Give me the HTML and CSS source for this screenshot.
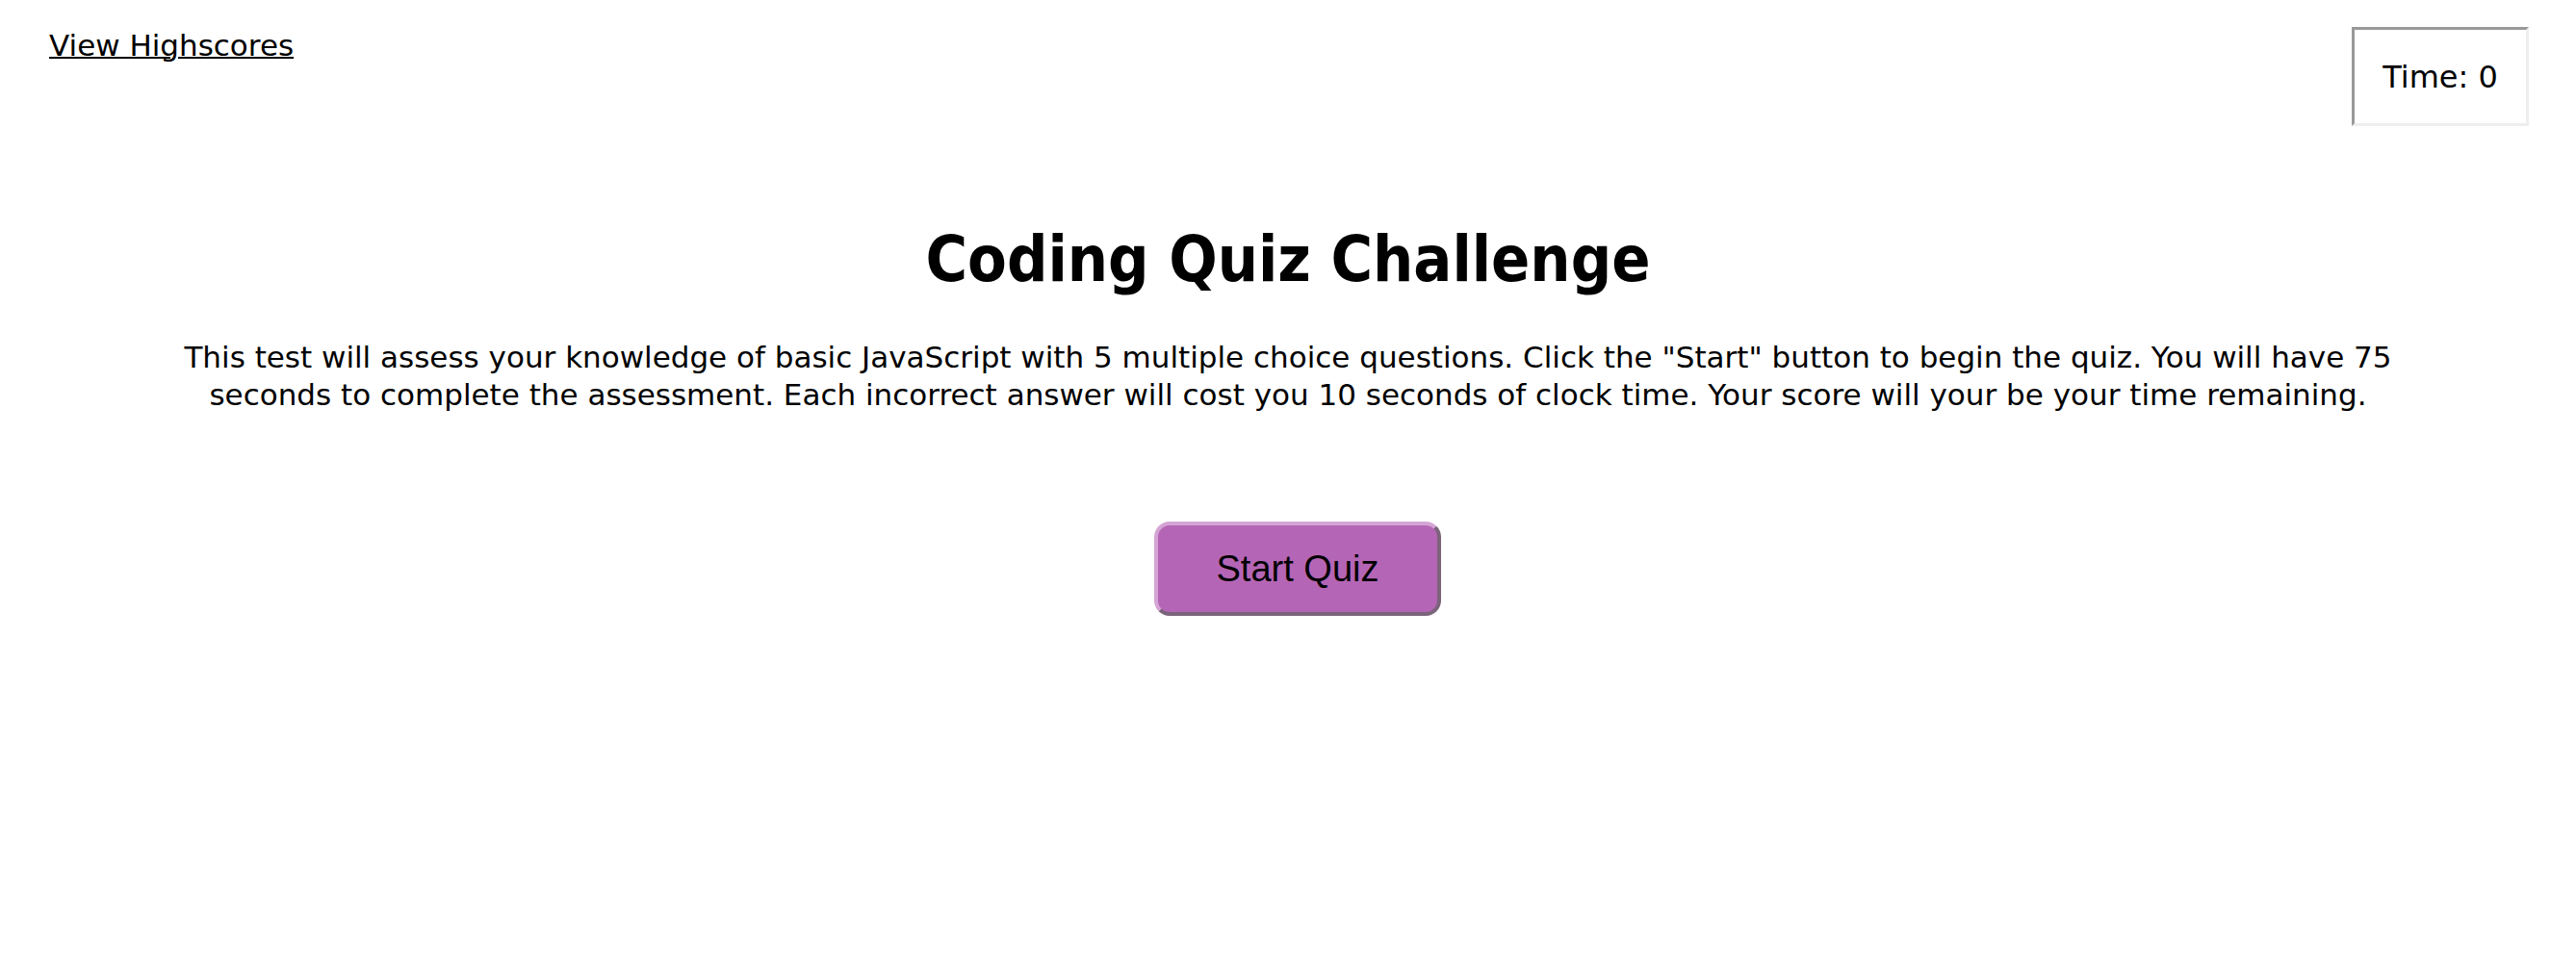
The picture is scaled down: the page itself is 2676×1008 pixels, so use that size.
FILE: index.html
```html
<!DOCTYPE html>
<html lang="en">
<head>
<meta charset="utf-8">
<title>Coding Quiz Challenge</title>
<link rel="stylesheet" href="styles.css">
</head>
<body>
<header class="topbar">
  <a class="highscores" href="#">View Highscores</a>
  <div class="timer">Time: 0</div>
</header>
<main class="intro">
  <h1 class="title">Coding Quiz Challenge</h1>
  <p class="lead">This test will assess your knowledge of basic JavaScript with 5 multiple choice questions. Click the "Start" button to begin the quiz. You will have 75 seconds to complete the assessment. Each incorrect answer will cost you 10 seconds of clock time. Your score will your be your time remaining.</p>
  <button class="start-btn" type="button">Start Quiz</button>
</main>
</body>
</html>
```
FILE: styles.css
```css
html, body {
  margin: 0;
  padding: 0;
  background: #ffffff;
}
body {
  font-family: "DejaVu Sans", sans-serif;
  color: #000000;
}
.topbar {
  display: flex;
  justify-content: space-between;
  align-items: flex-start;
  padding: 28px 49px 0 51px;
}
.highscores {
  color: #000000;
  font-size: 31px;
  line-height: 35px;
  padding-top: 2px;
  text-decoration: underline;
  text-decoration-thickness: 2px;
}
.timer {
  box-sizing: border-box;
  width: 184px;
  height: 103px;
  display: flex;
  align-items: center;
  justify-content: center;
  font-size: 32px;
  border-style: solid;
  border-width: 3px;
  border-color: #999999 #eeeeee #eeeeee #999999;
}
.intro {
  display: flex;
  flex-direction: column;
  align-items: center;
  padding-top: 99px;
}
.title {
  margin: 0;
  font-family: "DejaVu Sans Condensed", "DejaVu Sans", sans-serif;
  font-weight: bold;
  font-size: 66px;
  line-height: 79px;
}
.lead {
  margin: 43px 0 0;
  max-width: 2360px;
  text-align: center;
  font-size: 31px;
  line-height: 39px;
}
.start-btn {
  margin-top: 112px;
  margin-left: 20px;
  box-sizing: border-box;
  width: 298px;
  height: 98px;
  font-family: "Liberation Sans", Arial, sans-serif;
  font-size: 38px;
  color: #000000;
  background: #b565b5;
  border: 4px solid;
  border-color: #d4a4d4 #7b637b #7b637b #d4a4d4;
  border-radius: 16px;
  cursor: pointer;
}
```
